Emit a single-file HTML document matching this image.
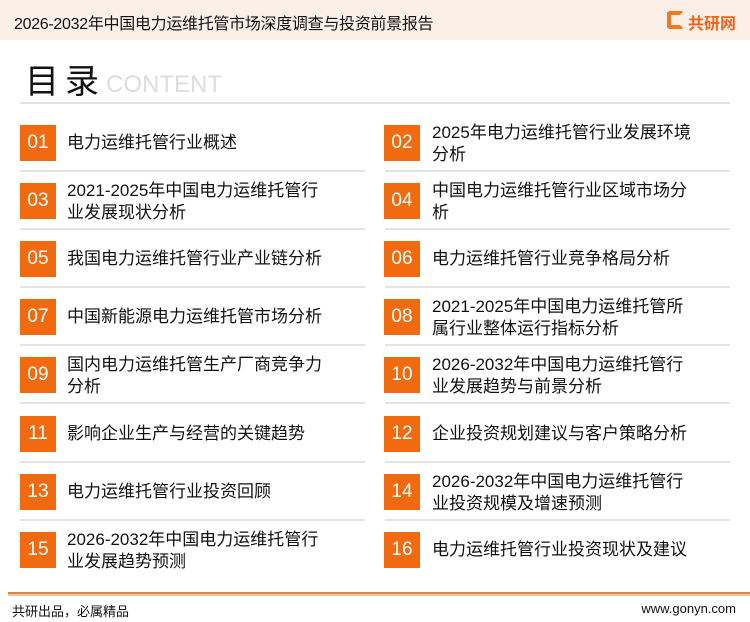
<!DOCTYPE html>
<html><head><meta charset="utf-8"><style>
*{margin:0;padding:0;box-sizing:border-box}
body{width:750px;height:622px;background:#fff;position:relative;overflow:hidden;font-family:"Liberation Sans","Noto Sans CJK SC",sans-serif;color:#111}
.hdr{position:absolute;left:0;top:0;width:750px;height:40px;background:#fcefe7}
.hdr .t{position:absolute;left:14px;top:10px;font-size:16px;letter-spacing:-0.3px}
.logo{position:absolute;left:688px;top:10px;font-size:16px;font-weight:bold;color:#f0641a}
.logo i{position:absolute;left:-21px;top:1px;width:17px;height:18px;border:4px solid #f07a20;border-right-color:transparent;border-radius:3px}
.mu{position:absolute;left:25px;top:62px;font-size:34px;line-height:40px;letter-spacing:6px}
.ct{position:absolute;left:106px;top:70px;font-size:24px;line-height:30px;color:#ddd}
.hl{position:absolute;left:20px;top:102px;width:710px;height:2px;background:#e2e2e2}
.b{position:absolute;width:36px;height:36px;background:#f26a10;color:#fff;font-size:19px;text-align:center;line-height:36px}
.x{position:absolute;font-size:17px;line-height:22px;white-space:nowrap;letter-spacing:0;color:#111}
.s{position:absolute;height:2px;background:#e4e4e4;width:345px}
.fl{position:absolute;left:8px;top:592px;width:742px;height:2px;background:#d8864a}
.fl2{position:absolute;left:8px;top:594px;width:742px;height:2px;background:#efc6a3}
.f1{position:absolute;left:12px;top:601px;font-size:13px}
.f2{position:absolute;right:14px;top:601px;font-size:13px}
</style></head><body>
<div class="hdr"><div class="t">2026-2032年中国电力运维托管市场深度调查与投资前景报告</div><div class="logo"><i></i>共研网</div></div>
<div class="mu">目录</div><div class="ct">CONTENT</div>
<div class="hl"></div>

<div class="b" style="left:20px;top:125px">01</div><div class="x" style="left:67px;top:132px">电力运维托管行业概述</div>
<div class="b" style="left:384px;top:125px">02</div><div class="x" style="left:432px;top:122px">2025年电力运维托管行业发展环境<br>分析</div>
<div class="s" style="left:20px;top:170px"></div><div class="s" style="left:385px;top:170px"></div>

<div class="b" style="left:20px;top:183px">03</div><div class="x" style="left:67px;top:180px">2021-2025年中国电力运维托管行<br>业发展现状分析</div>
<div class="b" style="left:384px;top:183px">04</div><div class="x" style="left:432px;top:180px">中国电力运维托管行业区域市场分<br>析</div>
<div class="s" style="left:20px;top:228px"></div><div class="s" style="left:385px;top:228px"></div>

<div class="b" style="left:20px;top:241px">05</div><div class="x" style="left:67px;top:248px">我国电力运维托管行业产业链分析</div>
<div class="b" style="left:384px;top:241px">06</div><div class="x" style="left:432px;top:248px">电力运维托管行业竞争格局分析</div>
<div class="s" style="left:20px;top:286px"></div><div class="s" style="left:385px;top:286px"></div>

<div class="b" style="left:20px;top:299px">07</div><div class="x" style="left:67px;top:306px">中国新能源电力运维托管市场分析</div>
<div class="b" style="left:384px;top:299px">08</div><div class="x" style="left:432px;top:296px">2021-2025年中国电力运维托管所<br>属行业整体运行指标分析</div>
<div class="s" style="left:20px;top:344px"></div><div class="s" style="left:385px;top:344px"></div>

<div class="b" style="left:20px;top:357px">09</div><div class="x" style="left:67px;top:354px">国内电力运维托管生产厂商竞争力<br>分析</div>
<div class="b" style="left:384px;top:357px">10</div><div class="x" style="left:432px;top:354px">2026-2032年中国电力运维托管行<br>业发展趋势与前景分析</div>
<div class="s" style="left:20px;top:402px"></div><div class="s" style="left:385px;top:402px"></div>

<div class="b" style="left:20px;top:416px">11</div><div class="x" style="left:67px;top:423px">影响企业生产与经营的关键趋势</div>
<div class="b" style="left:384px;top:416px">12</div><div class="x" style="left:432px;top:423px">企业投资规划建议与客户策略分析</div>
<div class="s" style="left:20px;top:461px"></div><div class="s" style="left:385px;top:461px"></div>

<div class="b" style="left:20px;top:474px">13</div><div class="x" style="left:67px;top:481px">电力运维托管行业投资回顾</div>
<div class="b" style="left:384px;top:474px">14</div><div class="x" style="left:432px;top:471px">2026-2032年中国电力运维托管行<br>业投资规模及增速预测</div>
<div class="s" style="left:20px;top:519px"></div><div class="s" style="left:385px;top:519px"></div>

<div class="b" style="left:20px;top:532px">15</div><div class="x" style="left:67px;top:529px">2026-2032年中国电力运维托管行<br>业发展趋势预测</div>
<div class="b" style="left:384px;top:532px">16</div><div class="x" style="left:432px;top:539px">电力运维托管行业投资现状及建议</div>

<div class="fl"></div><div class="fl2"></div>
<div class="f1">共研出品，必属精品</div><div class="f2">www.gonyn.com</div>
</body></html>
